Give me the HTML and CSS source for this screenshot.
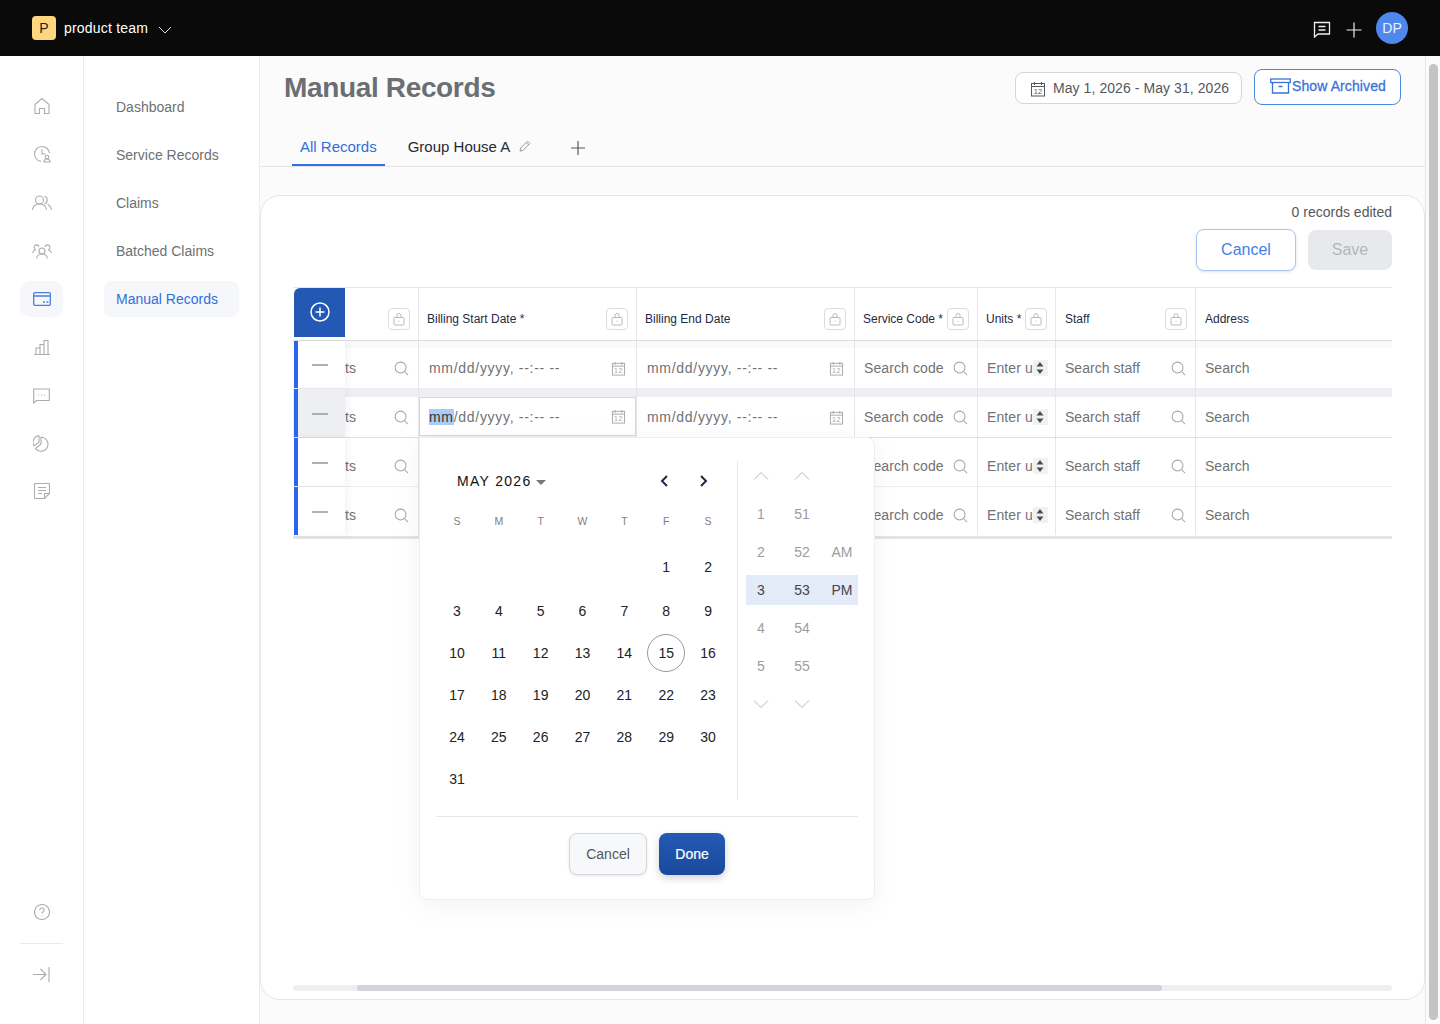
FILE: index.html
```html
<!DOCTYPE html>
<html lang="en">
<head>
  <meta charset="UTF-8">
  <title>Manual Records</title>
  <link rel="stylesheet" href="styles.css">
</head>
<body>

<svg class="sprite" width="0" height="0">
  <symbol id="i-lock" viewBox="0 0 14 14" fill="none" stroke="currentColor" stroke-width=".9">
    <rect x="2" y="5.5" width="10" height="7.5" rx=".8"/>
    <path d="M5 5.500V3.500a2 2 0 0 1 4 0V5.500"/>
    <path d="M6.500 9.200h1"/>
  </symbol>
  <symbol id="i-search" viewBox="0 0 16 16" fill="none" stroke="currentColor" stroke-width="1.1">
    <circle cx="7" cy="7" r="5.8"/>
    <path d="M11.2 11.2L15 15"/>
  </symbol>
  <symbol id="i-cal" viewBox="0 0 16 16" fill="none" stroke="currentColor">
    <rect x="1.5" y="2.5" width="13" height="12.5"/>
    <path d="M1.5 5.5h13M4.5 1v3M11.5 1v3"/>
    <text x="8" y="13.2" font-size="7.5" text-anchor="middle" fill="currentColor" stroke="none">12</text>
  </symbol>
  <symbol id="i-spin" viewBox="0 0 8 14" fill="currentColor">
    <path d="M4 1l3.5 4.5h-7zM4 13L.5 8.5h7z"/>
  </symbol>
  <symbol id="i-up" viewBox="0 0 16 10" fill="none" stroke="currentColor">
    <path d="M1 8.5l7-7 7 7"/>
  </symbol>
  <symbol id="i-down" viewBox="0 0 16 10" fill="none" stroke="currentColor">
    <path d="M1 1.5l7 7 7-7"/>
  </symbol>
</svg>

<header class="topbar">
  <div class="team-logo">P</div>
  <span class="team-name">product team</span>
  <svg class="team-caret" width="14" height="8" viewBox="0 0 14 8" fill="none" stroke="currentColor"><path d="M1 1l6 6 6-6"/></svg>
  <div class="topbar-right">
    <svg width="18" height="17" viewBox="0 0 18 17" fill="none" stroke="currentColor" stroke-width="1.3"><path d="M1.5 1.5h15v11.5H5L1.5 16z"/><path d="M5.5 5.5h7M5.5 9h7"/></svg>
    <svg width="16" height="16" viewBox="0 0 16 16" fill="none" stroke="currentColor" stroke-width="1.2"><path d="M8 .5v15M.5 8h15"/></svg>
    <div class="avatar">DP</div>
  </div>
</header>

<div class="layout">
  <aside class="rail">
    <a class="rail-item"><svg width="18" height="18" viewBox="0 0 18 18"><path d="M2 7.5L9 1.5l7 6V16.5h-4.5v-5h-5v5H2z"/></svg></a>
    <a class="rail-item rail-clock"><svg width="18" height="18" viewBox="0 0 18 18"><path d="M16.5 8A7.5 7.5 0 1 0 8 16.4"/><path d="M9 4.5V9h3.5"/><circle cx="14" cy="12" r="1.8"/><path d="M11 17c0-2 1.2-3 3-3s3 1 3 3z"/></svg></a>
    <a class="rail-item"><svg width="20" height="16" viewBox="0 0 20 16"><circle cx="7.5" cy="5" r="4"/><path d="M.5 15c.5-4 3-6 7-6s6.500 2 7 6"/><path d="M12.500 1.200a4 4 0 0 1 0 7.600M15.500 9.500c2 .8 3.500 2.800 4 5.500"/></svg></a>
    <a class="rail-item"><svg width="20" height="16" viewBox="0 0 20 16"><circle cx="10" cy="8" r="3"/><path d="M4.500 15.500c.5-3 2.500-4.500 5.500-4.500s5 1.500 5.500 4.500"/><path d="M7 3.800a2.500 2.500 0 1 0-3 3M.5 10c.3-1.500 1.300-2.500 2.800-3M13 3.800a2.500 2.500 0 1 1 3 3M19.500 10c-.3-1.500-1.300-2.500-2.800-3"/></svg></a>
    <a class="rail-item active"><svg width="18" height="14" viewBox="0 0 18 14"><rect x=".7" y=".7" width="16.600" height="12.600" rx="1"/><path d="M.7 4h16.600M10 10h2M13.500 10h2"/></svg></a>
    <a class="rail-item"><svg width="16" height="16" viewBox="0 0 16 16"><path d="M0 15.500h16M2 15.500V9h4v6.500M6 15.500V5.500h4v10M10 15.500V1.500h4v14"/></svg></a>
    <a class="rail-item rail-chat"><svg width="17" height="16" viewBox="0 0 17 16"><path d="M.7 1h15.600v11.500H3.500L.7 15z"/><path d="M5 7h1M8 7h1M11 7h1"/></svg></a>
    <a class="rail-item rail-pie"><svg width="17" height="17" viewBox="0 0 17 17"><path d="M8 2.200a7 7 0 1 1-5.500 11.400L8 9z"/><path d="M6 .8v6.400L1 10.700A6.500 6.500 0 0 1 6 .8z"/></svg></a>
    <a class="rail-item"><svg width="16" height="16" viewBox="0 0 16 16"><path d="M10.500 15.500H1.500a1 1 0 0 1-1-1v-13a1 1 0 0 1 1-1h13a1 1 0 0 1 1 1V10.500z"/><path d="M4 4.500h8M4 7.500h8M4 10.500h4M15.500 10.500h-5v5"/></svg></a>
    <div class="rail-spacer"></div>
    <a class="rail-item"><svg width="16" height="16" viewBox="0 0 16 16"><circle cx="8" cy="8" r="7.500"/><path d="M5.800 6.200c0-1.400 1-2.200 2.200-2.200s2.200.8 2.200 2c0 1.800-2.200 1.700-2.200 3.600M8 11.200v1"/></svg></a>
    <div class="rail-divider"></div>
    <a class="rail-item"><svg width="17" height="15" viewBox="0 0 17 15"><path d="M0 7.500h13M7.500 2l5.500 5.500L7.500 13M16 0v15"/></svg></a>
  </aside>

  <nav class="subnav">
    <a class="subnav-item">Dashboard</a>
    <a class="subnav-item">Service Records</a>
    <a class="subnav-item">Claims</a>
    <a class="subnav-item">Batched Claims</a>
    <a class="subnav-item active">Manual Records</a>
  </nav>

  <main class="main">
    <div class="page-head">
      <h1>Manual Records</h1>
      <button class="date-range">
        <svg class="icon-16" width="16" height="16"><use href="#i-cal"/></svg>
        May 1, 2026 - May 31, 2026
      </button>
      <button class="show-archived">
        <svg width="21" height="16" viewBox="0 0 21 16" fill="none" stroke="currentColor" stroke-width="1.300"><rect x=".7" y="1" width="19.600" height="3.500"/><path d="M2.500 4.500v10.500h16V4.500M8.500 8.500h4"/></svg>
        Show Archived
      </button>
    </div>

    <div class="tabs">
      <a class="tab active">All Records</a>
      <a class="tab">Group House A
        <svg width="12" height="12" viewBox="0 0 12 12" fill="none" stroke="currentColor" stroke-width=".9"><path d="M1 11l.7-3L8.500 1.200l2.300 2.300L4 10.300zM7.300 2.500l2.300 2.300"/></svg>
      </a>
      <svg class="tab-add" width="14" height="14" viewBox="0 0 14 14" fill="none" stroke="currentColor" stroke-width="1.200"><path d="M7 0v14M0 7h14"/></svg>
    </div>

    <section class="card">
      <div class="card-status">0 records edited</div>
      <div class="card-actions">
        <button class="btn-cancel">Cancel</button>
        <button class="btn-save">Save</button>
      </div>

      <div class="table">
        <div class="row head">
          <div class="add-cell"><svg width="20" height="20" viewBox="0 0 20 20" fill="none" stroke="#fff" stroke-width="1.500"><circle cx="10" cy="10" r="9"/><path d="M10 5.500v9M5.500 10h9"/></svg></div>
          <div class="th"><span></span><span class="lock"><svg width="14" height="14"><use href="#i-lock"/></svg></span></div>
          <div class="th"><span>Billing Start Date *</span><span class="lock"><svg width="14" height="14"><use href="#i-lock"/></svg></span></div>
          <div class="th"><span>Billing End Date</span><span class="lock"><svg width="14" height="14"><use href="#i-lock"/></svg></span></div>
          <div class="th"><span>Service Code *</span><span class="lock"><svg width="14" height="14"><use href="#i-lock"/></svg></span></div>
          <div class="th th-units"><span>Units *</span><span class="lock"><svg width="14" height="14"><use href="#i-lock"/></svg></span></div>
          <div class="th th-wide"><span>Staff</span><span class="lock"><svg width="14" height="14"><use href="#i-lock"/></svg></span></div>
          <div class="th th-wide"><span>Address</span></div>
        </div>

        <div class="row first">
          <div class="remove-cell"><i></i></div>
          <div class="td"><div class="field f-client"><span>ts</span><svg class="ic" width="15" height="15"><use href="#i-search"/></svg></div></div>
          <div class="td"><div class="field f-date"><span>mm/dd/yyyy, --:-- --</span><svg class="ic" width="15" height="15"><use href="#i-cal"/></svg></div></div>
          <div class="td"><div class="field f-date"><span>mm/dd/yyyy, --:-- --</span><svg class="ic" width="15" height="15"><use href="#i-cal"/></svg></div></div>
          <div class="td"><div class="field f-code"><span>Search code</span><svg class="ic" width="15" height="15"><use href="#i-search"/></svg></div></div>
          <div class="td"><div class="field f-units"><span>Enter u</span><b class="spin"><svg width="8" height="14"><use href="#i-spin"/></svg></b></div></div>
          <div class="td"><div class="field f-staff"><span>Search staff</span><svg class="ic" width="15" height="15"><use href="#i-search"/></svg></div></div>
          <div class="td"><div class="field f-staff"><span>Search</span></div></div>
        </div>

        <div class="row hover">
          <div class="remove-cell"><i></i></div>
          <div class="td"><div class="field f-client"><span>ts</span><svg class="ic" width="15" height="15"><use href="#i-search"/></svg></div></div>
          <div class="td"><div class="field f-date focused"><span><mark>mm</mark>/dd/yyyy, --:-- --</span><svg class="ic" width="15" height="15"><use href="#i-cal"/></svg></div></div>
          <div class="td"><div class="field f-date"><span>mm/dd/yyyy, --:-- --</span><svg class="ic" width="15" height="15"><use href="#i-cal"/></svg></div></div>
          <div class="td"><div class="field f-code"><span>Search code</span><svg class="ic" width="15" height="15"><use href="#i-search"/></svg></div></div>
          <div class="td"><div class="field f-units"><span>Enter u</span><b class="spin"><svg width="8" height="14"><use href="#i-spin"/></svg></b></div></div>
          <div class="td"><div class="field f-staff"><span>Search staff</span><svg class="ic" width="15" height="15"><use href="#i-search"/></svg></div></div>
          <div class="td"><div class="field f-staff"><span>Search</span></div></div>
        </div>

        <div class="row">
          <div class="remove-cell"><i></i></div>
          <div class="td"><div class="field f-client"><span>ts</span><svg class="ic" width="15" height="15"><use href="#i-search"/></svg></div></div>
          <div class="td"></div>
          <div class="td"></div>
          <div class="td"><div class="field f-code"><span>Search code</span><svg class="ic" width="15" height="15"><use href="#i-search"/></svg></div></div>
          <div class="td"><div class="field f-units"><span>Enter u</span><b class="spin"><svg width="8" height="14"><use href="#i-spin"/></svg></b></div></div>
          <div class="td"><div class="field f-staff"><span>Search staff</span><svg class="ic" width="15" height="15"><use href="#i-search"/></svg></div></div>
          <div class="td"><div class="field f-staff"><span>Search</span></div></div>
        </div>

        <div class="row last">
          <div class="remove-cell"><i></i></div>
          <div class="td"><div class="field f-client"><span>ts</span><svg class="ic" width="15" height="15"><use href="#i-search"/></svg></div></div>
          <div class="td"></div>
          <div class="td"></div>
          <div class="td"><div class="field f-code"><span>Search code</span><svg class="ic" width="15" height="15"><use href="#i-search"/></svg></div></div>
          <div class="td"><div class="field f-units"><span>Enter u</span><b class="spin"><svg width="8" height="14"><use href="#i-spin"/></svg></b></div></div>
          <div class="td"><div class="field f-staff"><span>Search staff</span><svg class="ic" width="15" height="15"><use href="#i-search"/></svg></div></div>
          <div class="td"><div class="field f-staff"><span>Search</span></div></div>
        </div>

        <div class="picker">
          <div class="picker-body">
            <div class="cal">
              <div class="cal-head">
                <span class="cal-title">MAY 2026</span><i class="cal-caret"></i>
                <svg class="cal-prev" width="8" height="12" viewBox="0 0 8 12" fill="none" stroke="currentColor" stroke-width="2"><path d="M7 1L2 6l5 5"/></svg>
                <svg class="cal-next" width="8" height="12" viewBox="0 0 8 12" fill="none" stroke="currentColor" stroke-width="2"><path d="M1 1l5 5-5 5"/></svg>
              </div>
              <div class="cal-week">
                <span>S</span><span>M</span><span>T</span><span>W</span><span>T</span><span>F</span><span>S</span>
              </div>
              <div class="cal-days">
                <span></span><span></span><span></span><span></span><span></span><span>1</span><span>2</span>
                <span>3</span><span>4</span><span>5</span><span>6</span><span>7</span><span>8</span><span>9</span>
                <span>10</span><span>11</span><span>12</span><span>13</span><span>14</span><span class="today">15</span><span>16</span>
                <span>17</span><span>18</span><span>19</span><span>20</span><span>21</span><span>22</span><span>23</span>
                <span>24</span><span>25</span><span>26</span><span>27</span><span>28</span><span>29</span><span>30</span>
                <span>31</span>
              </div>
            </div>
            <div class="time">
              <div class="time-row"><span><svg width="16" height="10"><use href="#i-up"/></svg></span><span><svg width="16" height="10"><use href="#i-up"/></svg></span><span></span></div>
              <div class="time-row"><span>1</span><span>51</span><span></span></div>
              <div class="time-row"><span>2</span><span>52</span><span>AM</span></div>
              <div class="time-row on"><span>3</span><span>53</span><span>PM</span></div>
              <div class="time-row"><span>4</span><span>54</span><span></span></div>
              <div class="time-row"><span>5</span><span>55</span><span></span></div>
              <div class="time-row"><span><svg width="16" height="10"><use href="#i-down"/></svg></span><span><svg width="16" height="10"><use href="#i-down"/></svg></span><span></span></div>
            </div>
          </div>
          <div class="picker-foot">
            <button class="picker-cancel">Cancel</button>
            <button class="picker-done">Done</button>
          </div>
        </div>
      </div>

      <div class="hscroll"><div class="hscroll-thumb"></div></div>
    </section>
  </main>

  <div class="vscroll"><div class="vscroll-thumb"></div></div>
</div>

</body>
</html>
```

FILE: styles.css
```css
* {
  box-sizing: border-box;
}
html, body {
  height: 100%;
}
body {
  margin: 0;
  overflow: hidden;
  font-family: "Liberation Sans", Arial, sans-serif;
  font-size: 14px;
  color: #333;
  background: #fff;
}
button {
  font-family: inherit;
  cursor: pointer;
}
.sprite {
  display: none;
}

/* top bar */
.topbar {
  display: flex;
  align-items: center;
  height: 56px;
  padding: 0 32px;
  background: #0a0a0a;
  color: #fff;
}
.team-logo {
  width: 24px;
  height: 24px;
  border-radius: 4px;
  background: #fdd67f;
  color: #222;
  text-align: center;
  line-height: 24px;
}
.team-name {
  margin-left: 8px;
  letter-spacing: .2px;
}
.team-caret {
  margin-left: 10px;
  margin-top: 3px;
  color: #ddd;
}
.topbar-right {
  display: flex;
  align-items: center;
  margin-left: auto;
  color: #eee;
}
.topbar-right svg:nth-child(1) {
  margin: 3px 0 0 1px;
}
.topbar-right svg:nth-child(2) {
  margin: 3px 0 0 15px;
}
.avatar {
  width: 32px;
  height: 32px;
  margin-left: 14px;
  border-radius: 50%;
  background: #4f88ec;
  color: #eaf1fe;
  text-align: center;
  line-height: 33px;
}

.layout {
  display: flex;
  height: 968px;
}

/* icon rail */
.rail {
  display: flex;
  flex-direction: column;
  align-items: center;
  width: 84px;
  padding: 32px 0 32px;
  border-right: 1px solid #ececee;
}
.rail-item {
  display: flex;
  align-items: center;
  justify-content: center;
  width: 43px;
  height: 36px;
  margin-bottom: 12px;
  border-radius: 10px;
}
.rail-item svg {
  fill: none;
  stroke: #aaacb0;
  stroke-width: 1.1;
}
.rail-item.active {
  background: #f6f7fb;
}
.rail-item.active svg {
  stroke: #4a7fe0;
  stroke-width: 1.3;
}
.rail-clock {
  margin-bottom: 13px;
}
.rail-chat {
  margin-top: 1px;
  margin-bottom: 11px;
}
.rail-pie {
  margin-bottom: 12px;
}
.rail-spacer {
  flex: 1;
}
.rail-divider {
  width: 43px;
  height: 1px;
  margin: 1px 0 12px;
  background: #e9e9eb;
}
.rail-item:last-child {
  margin-bottom: 0;
}

/* second nav */
.subnav {
  display: flex;
  flex-direction: column;
  gap: 12px;
  width: 176px;
  padding: 33px 20px 0;
  border-right: 1px solid #ececee;
}
.subnav-item {
  height: 36px;
  padding: 0 12px;
  border-radius: 8px;
  color: #6e7074;
  line-height: 36px;
  white-space: nowrap;
}
.subnav-item.active {
  background: #f6f7fb;
  color: #2f6fdb;
}

/* main area */
.main {
  flex: 1;
  background: #fbfbfb;
  min-width: 0;
}
.page-head {
  display: flex;
  align-items: center;
  height: 64px;
  padding: 0 24px;
}
.page-head h1 {
  margin: 0 auto 0 0;
  font-size: 28px;
  letter-spacing: -.35px;
  color: #6b6e72;
}
.date-range {
  display: flex;
  align-items: center;
  gap: 7px;
  width: 227px;
  height: 32px;
  padding: 0 0 0 14px;
  border: 1px solid #d5d6da;
  border-radius: 8px;
  background: #fff;
  color: #55575b;
  font-size: 14px;
  letter-spacing: .07px;
}
.icon-16 {
  color: #55575b;
  margin-top: 2px;
}
.show-archived {
  display: flex;
  align-items: center;
  gap: 1px;
  width: 147px;
  height: 36px;
  margin-left: 12px;
  margin-top: -2px;
  padding: 0 0 2px 15px;
  border: 1px solid #4f85e3;
  border-radius: 8px;
  background: #fff;
  color: #3a72d8;
  font-size: 14px;
  letter-spacing: .1px;
  -webkit-text-stroke: .3px;
}
.tabs {
  display: flex;
  align-items: center;
  height: 47px;
  padding: 0 32px;
  border-bottom: 1px solid #e6e6e8;
}
.tab {
  position: relative;
  display: flex;
  align-items: center;
  gap: 9px;
  height: 46px;
  padding: 6px 8px 0;
  font-size: 15px;
  color: #252a38;
}
.tab svg {
  color: #8b8d91;
}
.tab.active {
  margin-right: 15px;
  border-bottom: 2px solid #3070dc;
  padding-top: 8px;
  color: #2f6fdb;
}
.tab-add {
  margin: 10px 0 0 32px;
  color: #55575b;
}

/* card */
.card {
  position: relative;
  width: 1165px;
  height: 805px;
  margin-top: 28px;
  padding: 0 32px 0 32px;
  border: 1px solid #e6e6e8;
  border-radius: 20px;
  background: #fff;
}
.card-status {
  margin-top: 8px;
  text-align: right;
  color: #55575b;
  line-height: 16px;
}
.card-actions {
  display: flex;
  justify-content: flex-end;
  gap: 12px;
  margin-top: 9px;
}
.btn-cancel {
  width: 100px;
  height: 42px;
  border: 1px solid #a9c6f6;
  border-radius: 8px;
  background: #fff;
  box-shadow: 0 1px 3px rgba(0,0,0,.12);
  color: #3f80ea;
  font-size: 16px;
}
.btn-save {
  width: 84px;
  height: 40px;
  margin-top: 1px;
  border: none;
  border-radius: 8px;
  background: #e8e9ec;
  color: #b4b6ba;
  font-size: 16px;
}

/* table */
.table {
  position: relative;
  margin-top: 16px;
}
.row {
  display: grid;
  grid-template-columns: 52px 74px 218px 218px 123px 78px 140px 196px;
  height: 49px;
  border-bottom: 1px solid #ececee;
}
.row.head {
  height: 54px;
  border-top: 1px solid #e6e6e8;
  border-bottom: 1px solid #dcdcdf;
}
.row.first {
  height: 48px;
  background: #fafafa;
  border-bottom-color: #eeeff3;
}
.row.hover {
  background: #eeeff3;
  border-bottom-color: #d5e0f7;
}
.row.last {
  height: 52px;
  padding-bottom: 2px;
  border-bottom: 3px solid #e3e3e6;
}
.add-cell {
  display: flex;
  align-items: center;
  justify-content: center;
  height: 49px;
  margin-left: 1px;
  padding-bottom: 1px;
  border-top-left-radius: 6px;
  background: #2358b5;
}
.th {
  display: flex;
  align-items: center;
  justify-content: space-between;
  gap: 4px;
  padding: 9px 8px 0;
  border-right: 1px solid #e6e6e8;
  font-size: 12px;
  color: #1f2a44;
  white-space: nowrap;
}
.th-wide {
  padding-left: 9px;
  padding-right: 8px;
}
.th:last-child {
  border-right: none;
}
.lock {
  display: flex;
  align-items: center;
  justify-content: center;
  width: 22px;
  height: 22px;
  flex: none;
  border: 1px solid #dcdcdf;
  border-radius: 4px;
  color: #b0b2b6;
}
.remove-cell {
  position: relative;
  z-index: 2;
  margin-left: 1px;
  border-left: 4px solid #2a66ec;
  background: #fff;
  box-shadow: 4px 0 6px rgba(0,0,0,.04);
}
.remove-cell i {
  display: block;
  width: 16px;
  height: 2px;
  margin: 24px 0 0 14px;
  background: #aeb0b4;
}
.row.first .remove-cell i {
  margin-top: 23px;
}
.row.hover .remove-cell {
  background: #eeeff3;
}
.td {
  padding-top: 8px;
  border-right: 1px solid #e6e6e8;
  background: transparent;
  min-width: 0;
}
.row.first .td {
  padding-top: 7px;
}
.td:last-child {
  border-right: none;
}
.field {
  display: flex;
  align-items: center;
  justify-content: space-between;
  height: 40px;
  padding: 0 10px;
  background: #fff;
  color: #707276;
  font-size: 14px;
  letter-spacing: .1px;
  white-space: nowrap;
  overflow: hidden;
}
.field .ic {
  flex: none;
  color: #a4a6aa;
}
.f-client {
  padding: 0 9px 0 0;
}
.f-date {
  letter-spacing: .7px;
  padding: 0 10px 0 10px;
}
.f-code, .f-units, .f-staff {
  padding: 0 9px 0 9px;
}
.f-staff {
  letter-spacing: .03px;
}
.field.focused {
  height: 39px;
  border: 1px solid #c9d9f7;
  padding-left: 9px;
  padding-right: 9px;
}
mark {
  background: #a9cdf7;
  color: #333;
}
.spin {
  display: flex;
  align-items: center;
  justify-content: center;
  flex: none;
  width: 15px;
  height: 16px;
  background: #f1f1f2;
  color: #4a4c50;
}

/* date picker popup */
.picker {
  position: absolute;
  z-index: 5;
  left: 126px;
  top: 150px;
  width: 456px;
  height: 463px;
  padding: 23px 16px 0 16px;
  border: 1px solid #eeeef0;
  border-radius: 0 8px 8px 8px;
  background: #fff;
  box-shadow: 0 6px 30px rgba(0,0,0,.05);
}
.picker-body {
  display: flex;
  height: 339px;
}
.cal {
  width: 303px;
  padding-right: 8px;
  border-right: 1px solid #e6e6e8;
}
.cal-head {
  display: flex;
  align-items: center;
  height: 40px;
  padding-left: 21px;
  color: #1f2a44;
}
.cal-title {
  color: #111;
  letter-spacing: 1.3px;
}
.cal-caret {
  margin: 2px 0 0 5px;
  border-left: 5px solid transparent;
  border-right: 5px solid transparent;
  border-top: 5px solid #777;
}
.cal-prev {
  margin-left: auto;
}
.cal-next {
  margin-left: 32px;
  margin-right: 21px;
}
.cal-week {
  display: grid;
  grid-template-columns: repeat(7, 1fr);
  height: 44px;
  padding-bottom: 4px;
  align-items: center;
  text-align: center;
  font-size: 10.500px;
  color: #7e8084;
}
.cal-days {
  display: grid;
  grid-template-columns: repeat(7, 1fr);
  grid-template-rows: 44px 43px 42px 42px 42px 42px;
  align-items: center;
  justify-items: center;
  color: #222;
}
.today {
  width: 38px;
  height: 38px;
  border: 1px solid #9a9a9e;
  border-radius: 50%;
  text-align: center;
  line-height: 36px;
}
.time {
  margin: -4px 0 0 8px;
}
.time-row {
  display: grid;
  grid-template-columns: 30px 52px 30px;
  align-items: center;
  height: 38px;
  color: #9b9da1;
  text-align: center;
}
.time-row span {
  display: flex;
  align-items: center;
  justify-content: center;
  height: 30px;
}
.time-row span:nth-child(3) {
  padding-right: 2px;
}
.time-row svg {
  color: #b5b7bb;
}
.time-row.on span {
  background: #e3eaf8;
  color: #44464a;
}
.picker-foot {
  display: flex;
  justify-content: center;
  gap: 12px;
  margin-top: 16px;
  padding-top: 16px;
  border-top: 1px solid #e6e6e8;
}
.picker-cancel {
  width: 78px;
  height: 42px;
  border: 1px solid #d6d7db;
  border-radius: 8px;
  background: #f7f8fa;
  box-shadow: 0 1px 3px rgba(0,0,0,.1);
  color: #55575b;
  font-size: 14px;
}
.picker-done {
  width: 66px;
  height: 42px;
  border: none;
  border-radius: 8px;
  background: linear-gradient(#2359b6, #1b4a9c);
  box-shadow: 0 3px 8px rgba(0,0,0,.18);
  color: #fff;
  font-size: 14px;
  -webkit-text-stroke: .2px;
}

/* scrollbars */
.hscroll {
  position: absolute;
  left: 32px;
  right: 32px;
  bottom: 8px;
  height: 6px;
  border-radius: 3px;
  background: #eeeff3;
}
.hscroll-thumb {
  width: 805px;
  height: 6px;
  margin-left: 64px;
  border-radius: 3px;
  background: #d0d3d8;
}
.vscroll {
  width: 15px;
  padding: 8px 2px 0 3px;
  border-left: 1px solid #e6e6e8;
  background: #fbfbfb;
}
.vscroll-thumb {
  height: 956px;
  border-radius: 5px;
  background: #c4c4c4;
}
```
